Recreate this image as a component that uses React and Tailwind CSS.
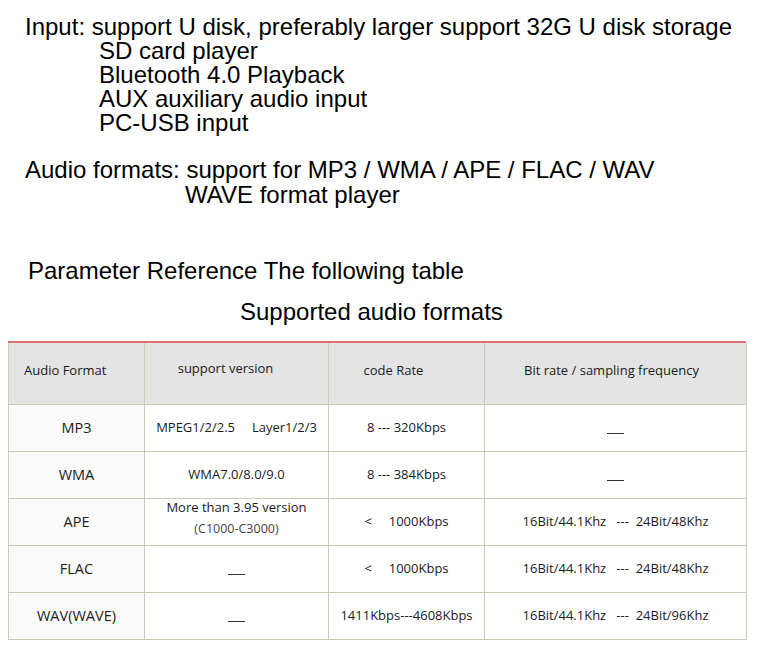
import React from 'react';

const rows = [
  ['MP3', 'MPEG1/2/2.5\u00a0\u00a0\u00a0\u00a0 Layer1/2/3', '8 --- 320Kbps', 'dash'],
  ['WMA', 'WMA7.0/8.0/9.0', '8 --- 384Kbps', 'dash'],
  ['APE', 'ape', '<\u00a0\u00a0\u00a0\u00a0 1000Kbps', '16Bit/44.1Khz\u00a0\u00a0 ---\u00a0 24Bit/48Khz'],
  ['FLAC', 'dash', '<\u00a0\u00a0\u00a0\u00a0 1000Kbps', '16Bit/44.1Khz\u00a0\u00a0 ---\u00a0 24Bit/48Khz'],
  ['WAV(WAVE)', 'dash', '1411Kbps---4608Kbps', '16Bit/44.1Khz\u00a0\u00a0 ---\u00a0 24Bit/96Khz'],
];

function Dash() {
  return <span className="inline-block w-[17px] h-px bg-[#333] translate-y-[2px]" />;
}

function Cell({ value }) {
  if (value === 'dash') return <Dash />;
  if (value === 'ape') {
    return (
      <div className="leading-[21px] -translate-y-[4px]">
        <div>More than 3.95 version</div>
        <div className="text-[12.5px] text-[#444]">(C1000-C3000)</div>
      </div>
    );
  }
  return value;
}

export default function App() {
  return (
    <div className="w-[759px] h-[660px] bg-white text-black overflow-hidden" style={{ fontFamily: '"Liberation Sans", Arial, sans-serif' }}>
      <div className="pt-[15px] pl-[25px] text-[24px] leading-[24px]">
        <div>Input: support U disk, preferably larger support 32G U disk storage</div>
        <div className="pl-[74px]">
          <div>SD card player</div>
          <div>Bluetooth 4.0 Playback</div>
          <div>AUX auxiliary audio input</div>
          <div>PC-USB input</div>
        </div>
        <div className="mt-[23px]">Audio formats: support for MP3 / WMA / APE / FLAC / WAV</div>
        <div className="pl-[160px] mt-px">WAVE format player</div>
      </div>
      <div className="mt-[52px] pl-[28px] text-[24px] leading-[24px]">Parameter Reference The following table</div>
      <div className="mt-[17px] pl-[240px] text-[24px] leading-[24px]">Supported audio formats</div>

      <div className="mt-[17px] ml-[8px] w-[738px] border-t-2 border-[#d97474]" style={{ fontFamily: '"Open Sans", "Noto Sans", sans-serif' }}>
        <table className="w-full border-collapse table-fixed text-[13px] text-[#1a1a1a]">
          <colgroup>
            <col className="w-[136px]" />
            <col className="w-[184px]" />
            <col className="w-[156px]" />
            <col className="w-[262px]" />
          </colgroup>
          <thead>
            <tr className="h-[61px] bg-[#e4e4e4]">
              <th className="border border-t-0 border-[#cfcab8] font-normal text-left pl-[15px] pb-[6px]">Audio Format</th>
              <th className="border border-t-0 border-[#cfcab8] font-normal pr-[22px] pb-[10px]">support version</th>
              <th className="border border-t-0 border-[#cfcab8] font-normal pr-[26px] pb-[6px]">code Rate</th>
              <th className="border border-t-0 border-[#cfcab8] font-normal pr-[8px] pb-[6px]">Bit rate / sampling frequency</th>
            </tr>
          </thead>
          <tbody>
            {rows.map((r) => (
              <tr key={r[0]} className="h-[47px]">
                <td className="border border-[#cfcab8] bg-[#fafafa] text-center text-[14.5px]">{r[0]}</td>
                <td className="border border-[#cfcab8] text-center">
                  <Cell value={r[1]} />
                </td>
                <td className="border border-[#cfcab8] text-center">
                  <Cell value={r[2]} />
                </td>
                <td className="border border-[#cfcab8] text-center">
                  <Cell value={r[3]} />
                </td>
              </tr>
            ))}
          </tbody>
        </table>
      </div>
    </div>
  );
}
